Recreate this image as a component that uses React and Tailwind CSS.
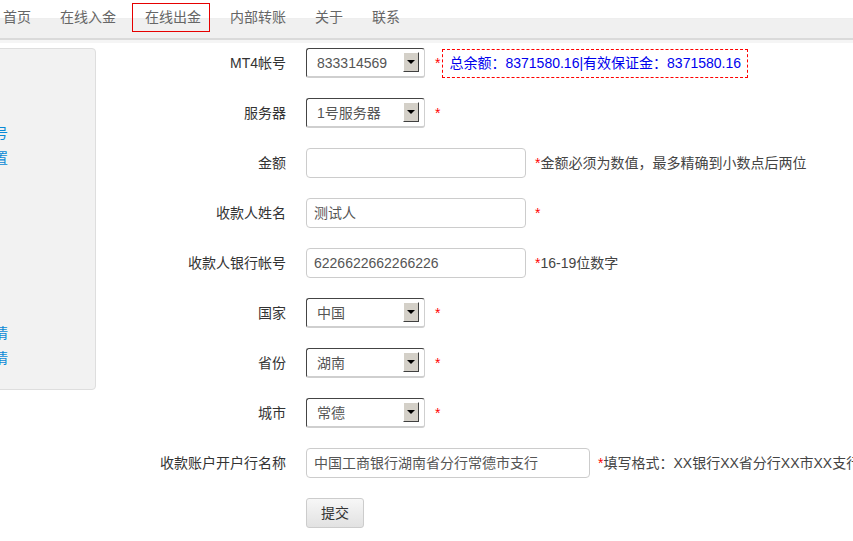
import React from "react";

const font = { fontFamily: '"Liberation Sans", "Noto Sans CJK SC", sans-serif' };

const navItems = ["首页", "在线入金", "在线出金", "内部转账", "关于", "联系"];

// only the tail of these links shows, the sidebar is scrolled off to the left
const sideItems = ["我的帐号", "密码设置", "", "", "", "", "", "", "入金详情", "出金详情"];

function Select({ value }) {
    return (
        <div className="relative w-[119px] h-[30px] border border-t-[#444] border-l-[#444] border-r-[#cfcfcf] border-b-[2px] border-b-[#cfcfcf] rounded-[3px] bg-white pl-[10px] leading-[28px] text-[#555]">
            {value}
            <span className="absolute right-[5px] top-[3px] w-[16px] h-[20px] bg-[#d4d0c8] border border-t-white border-l-white border-r-[#404040] border-b-[#404040] flex items-center justify-center">
                <span className="w-0 h-0 border-l-[4px] border-r-[4px] border-t-[4px] border-l-transparent border-r-transparent border-t-black"></span>
            </span>
        </div>
    );
}

function Input({ value, width = "w-[220px]" }) {
    return (
        <div className={`${width} h-[30px] border border-[#cccccc] rounded-[4px] bg-white pl-[7px] leading-[28px] text-[#555]`}>
            {value}
        </div>
    );
}

function Star() {
    return <span className="text-[#f00]">*</span>;
}

function Row({ label, children }) {
    return (
        <div className="flex items-center h-[30px] mb-[20px]">
            <div className="w-[190px] text-right text-[#333]">{label}</div>
            <div className="ml-[20px] flex items-center">{children}</div>
        </div>
    );
}

export default function App() {
    return (
        <div className="w-[853px] h-[541px] overflow-hidden bg-white text-[14px]" style={font}>
            {/* nav */}
            <div className="h-[40px] border-b-2 border-[#dadada] bg-[linear-gradient(to_bottom,#ffffff_18px,#ececec_18px,#f0f0f0_19px)]">
                <div className="flex ml-[-10px] pt-[3px]">
                    {navItems.map((item) => (
                        <div
                            key={item}
                            className={`h-[29px] leading-[27px] pl-[12px] pr-[8px] mr-[7px] border whitespace-nowrap text-[#666] ${item === "在线出金" ? "border-[#e60000]" : "border-transparent"}`}
                        >
                            {item}
                        </div>
                    ))}
                </div>
            </div>
            <div className="h-[3px] bg-[#f5f5f5]"></div>

            <div className="flex mt-[5px]">
                {/* sidebar */}
                <div className="ml-[-104px] w-[200px] h-[342px] shrink-0 border border-[#dedede] rounded-[4px] bg-[#f2f2f2] pt-[72px] pl-[55px]">
                    {sideItems.map((s, i) => (
                        <div key={i} className="h-[25px] leading-[25px] text-[#0a8ad6] whitespace-nowrap">{s}</div>
                    ))}
                </div>

                {/* form */}
                <div className="flex flex-col">
                    <Row label="MT4帐号">
                        <Select value="833314569" />
                        <span className="ml-[10px]"><Star /></span>
                        <span className="ml-[2px] h-[29px] leading-[27px] px-[6px] border border-dashed border-[#f00] text-[#0000ee] whitespace-nowrap">
                            总余额：8371580.16|有效保证金：8371580.16
                        </span>
                    </Row>
                    <Row label="服务器">
                        <Select value="1号服务器" />
                        <span className="ml-[10px]"><Star /></span>
                    </Row>
                    <Row label="金额">
                        <Input value="" />
                        <span className="ml-[9px] text-[#444] whitespace-nowrap"><Star />金额必须为数值，最多精确到小数点后两位</span>
                    </Row>
                    <Row label="收款人姓名">
                        <Input value="测试人" />
                        <span className="ml-[9px]"><Star /></span>
                    </Row>
                    <Row label="收款人银行帐号">
                        <Input value="6226622662266226" />
                        <span className="ml-[9px] text-[#444] whitespace-nowrap"><Star />16-19位数字</span>
                    </Row>
                    <Row label="国家">
                        <Select value="中国" />
                        <span className="ml-[10px]"><Star /></span>
                    </Row>
                    <Row label="省份">
                        <Select value="湖南" />
                        <span className="ml-[10px]"><Star /></span>
                    </Row>
                    <Row label="城市">
                        <Select value="常德" />
                        <span className="ml-[10px]"><Star /></span>
                    </Row>
                    <Row label="收款账户开户行名称">
                        <Input value="中国工商银行湖南省分行常德市支行" width="w-[284px]" />
                        <span className="ml-[8px] text-[#444] whitespace-nowrap"><Star />填写格式：XX银行XX省分行XX市XX支行</span>
                    </Row>
                    <Row label="">
                        <button className="w-[58px] h-[30px] border border-[#cccccc] rounded-[3px] bg-[linear-gradient(to_bottom,#f7f7f7,#ececec_50%,#e2e2e2)] text-[#333] text-[14px]">
                            提交
                        </button>
                    </Row>
                </div>
            </div>
        </div>
    );
}
